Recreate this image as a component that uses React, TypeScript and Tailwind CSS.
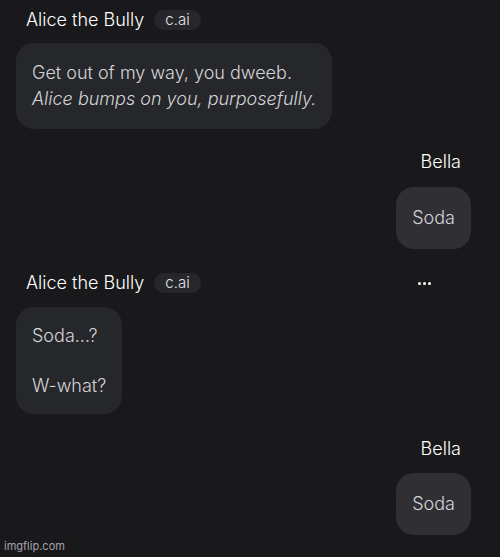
import React from 'react'

function AiName({ dots }: { dots?: boolean }) {
  return (
    <div className="flex items-center h-5 pl-[10px]">
      <span className="text-[18px] font-light text-white leading-5">Alice the Bully</span>
      <span className="ml-[10px] h-5 px-[11px] rounded-full bg-[#26272b] text-[15px] font-light leading-5 text-[#e4e4e7]">c.ai</span>
      {dots && (
        <div className="ml-auto mr-[40px] flex gap-[2px]">
          <span className="w-[3px] h-[3px] rounded-full bg-white" />
          <span className="w-[3px] h-[3px] rounded-full bg-white" />
          <span className="w-[3px] h-[3px] rounded-full bg-white" />
        </div>
      )}
    </div>
  )
}

function UserName() {
  return (
    <div className="flex justify-end h-5 pr-[10px]">
      <span className="text-[18px] font-light leading-5 text-white">Bella</span>
    </div>
  )
}

export default function App() {
  return (
    <div
      className="relative w-[500px] h-[557px] bg-[#19191c] overflow-hidden pl-4 pr-[29px] pt-[10px]"
      style={{ fontFamily: 'Inter, "Noto Sans", sans-serif' }}
    >
      <AiName />
      <div className="mt-[13px] w-fit whitespace-nowrap rounded-[18px] bg-[#26272b] px-4 py-[17px] text-[18px] font-light leading-[26px] text-[#d4d4d8]">
        <p>Get out of my way, you dweeb.</p>
        <p className="italic">Alice bumps on you, purposefully.</p>
      </div>

      <div className="mt-[23px]">
        <UserName />
      </div>
      <div className="mt-[15px] flex justify-end">
        <div className="whitespace-nowrap rounded-[18px] bg-[#2f2f34] px-4 py-[19px] text-[18px] font-light leading-[24px] text-[#d4d4d8]">Soda</div>
      </div>

      <div className="mt-[24px]">
        <AiName dots />
      </div>
      <div className="mt-[14px] w-fit whitespace-nowrap rounded-[18px] bg-[#26272b] px-4 py-4 text-[18px] font-light leading-[25px] text-[#d4d4d8]">
        <p>Soda...?</p>
        <p>&nbsp;</p>
        <p>W-what?</p>
      </div>

      <div className="mt-[25px]">
        <UserName />
      </div>
      <div className="mt-[14px] flex justify-end">
        <div className="whitespace-nowrap rounded-[18px] bg-[#2f2f34] px-4 py-[19px] text-[18px] font-light leading-[24px] text-[#d4d4d8]">Soda</div>
      </div>

      <span className="absolute left-[4px] bottom-[3px] text-[11px] text-[#a1a1aa]">imgflip.com</span>
    </div>
  )
}
